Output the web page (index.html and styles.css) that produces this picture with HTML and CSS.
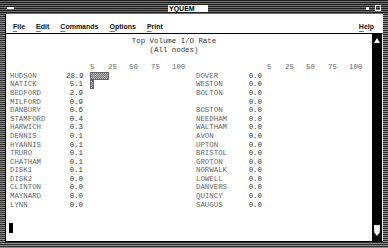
FILE: index.html
```html
<!DOCTYPE html>
<html lang="en">
<head>
    <meta charset="UTF-8">
    <title>YQUEM</title>
    <link rel="stylesheet" href="styles.css">
</head>
<body>

    <div class="window">
        <div class="titlebar">
            <span class="win-menu"></span>
            <span class="title">YQUEM</span>
            <span class="win-min"></span>
            <span class="win-max"></span>
        </div>

        <div class="menubar">
            <span class="menu"><u>F</u>ile</span>
            <span class="menu"><u>E</u>dit</span>
            <span class="menu"><u>C</u>ommands</span>
            <span class="menu"><u>O</u>ptions</span>
            <span class="menu"><u>P</u>rint</span>
            <span class="menu help"><u>H</u>elp</span>
        </div>

        <div class="main">
            <div class="report">
                <div class="heading">Top Volume I/O Rate</div>
                <div class="heading">(All nodes)</div>
                <div class="line"></div>

                <div class="row">
                    <span></span><span></span>
                    <span class="scale"><span>5</span><span>25</span><span>50</span><span>75</span><span>100</span></span>
                    <span></span><span></span>
                    <span class="scale right"><span>5</span><span>25</span><span>50</span><span>75</span><span>100</span></span>
                </div>

                <div class="row">
                    <span class="name">HUDSON</span><span class="val">28.9</span>
                    <span class="cell"><span class="bar" style="width:19px"></span></span>
                    <span class="name">DOVER</span><span class="val">0.0</span><span class="cell"></span>
                </div>
                <div class="row">
                    <span class="name">NATICK</span><span class="val">5.1</span>
                    <span class="cell"><span class="bar" style="width:4px"></span></span>
                    <span class="name">WESTON</span><span class="val">0.0</span><span class="cell"></span>
                </div>
                <div class="row">
                    <span class="name">BEDFORD</span><span class="val">2.9</span><span class="cell"></span>
                    <span class="name">BOLTON</span><span class="val">0.0</span><span class="cell"></span>
                </div>
                <div class="row">
                    <span class="name">MILFORD</span><span class="val">0.9</span><span class="cell"></span>
                    <span class="name"></span><span class="val">0.0</span><span class="cell"></span>
                </div>
                <div class="row">
                    <span class="name">DANBURY</span><span class="val">0.6</span><span class="cell"></span>
                    <span class="name">BOSTON</span><span class="val">0.0</span><span class="cell"></span>
                </div>
                <div class="row">
                    <span class="name">STAMFORD</span><span class="val">0.4</span><span class="cell"></span>
                    <span class="name">NEEDHAM</span><span class="val">0.0</span><span class="cell"></span>
                </div>
                <div class="row">
                    <span class="name">HARWICH</span><span class="val">0.3</span><span class="cell"></span>
                    <span class="name">WALTHAM</span><span class="val">0.0</span><span class="cell"></span>
                </div>
                <div class="row">
                    <span class="name">DENNIS</span><span class="val">0.1</span><span class="cell"></span>
                    <span class="name">AVON</span><span class="val">0.0</span><span class="cell"></span>
                </div>
                <div class="row">
                    <span class="name">HYANNIS</span><span class="val">0.1</span><span class="cell"></span>
                    <span class="name">UPTON</span><span class="val">0.0</span><span class="cell"></span>
                </div>
                <div class="row">
                    <span class="name">TRURO</span><span class="val">0.1</span><span class="cell"></span>
                    <span class="name">BRISTOL</span><span class="val">0.0</span><span class="cell"></span>
                </div>
                <div class="row">
                    <span class="name">CHATHAM</span><span class="val">0.1</span><span class="cell"></span>
                    <span class="name">GROTON</span><span class="val">0.0</span><span class="cell"></span>
                </div>
                <div class="row">
                    <span class="name">DISK1</span><span class="val">0.1</span><span class="cell"></span>
                    <span class="name">NORWALK</span><span class="val">0.0</span><span class="cell"></span>
                </div>
                <div class="row">
                    <span class="name">DISK2</span><span class="val">0.0</span><span class="cell"></span>
                    <span class="name">LOWELL</span><span class="val">0.0</span><span class="cell"></span>
                </div>
                <div class="row">
                    <span class="name">CLINTON</span><span class="val">0.0</span><span class="cell"></span>
                    <span class="name">DANVERS</span><span class="val">0.0</span><span class="cell"></span>
                </div>
                <div class="row">
                    <span class="name">MAYNARD</span><span class="val">0.0</span><span class="cell"></span>
                    <span class="name">QUINCY</span><span class="val">0.0</span><span class="cell"></span>
                </div>
                <div class="row">
                    <span class="name">LYNN</span><span class="val">0.0</span><span class="cell"></span>
                    <span class="name">SAUGUS</span><span class="val">0.0</span><span class="cell"></span>
                </div>

                <div class="cursor"></div>
            </div>

            <div class="scrollbar">
                <svg class="arrow-up" width="6" height="5" viewBox="0 0 6 5">
                    <polygon points="3,0 6,5 0,5" fill="#fff"/>
                </svg>
                <svg class="arrow-down" width="6" height="11" viewBox="0 0 6 11">
                    <rect x="0.5" y="0.5" width="5" height="6" fill="#fff" stroke="#ddd"/>
                    <polygon points="0,7 6,7 3,11" fill="#fff"/>
                </svg>
            </div>
        </div>
    </div>

</body>
</html>
```

FILE: styles.css
```css
/* Okno w stylu Motif */
body {
    margin: 0;
    background-color: #fff;
}

.window {
    width: 388px;
    height: 248px;
    box-sizing: border-box;
    padding: 0 5px 6px 5px;
    display: flex;
    flex-direction: column;
    background: repeating-linear-gradient(to bottom, #2c2c2c 0 1px, #8e8e8e 1px 2px);
    font-family: "Liberation Sans", Arial, sans-serif;
}

.titlebar {
    height: 14px;
    box-sizing: border-box;
    margin: 0 -5px;
    padding: 2px 7px 0 7px;
    display: flex;
    align-items: center;
    background: repeating-linear-gradient(to bottom, #1e1e1e 0 1px, #707070 1px 2px);
}

.win-menu {
    width: 7px;
    height: 2px;
    background-color: #fff;
}

.title {
    margin-left: 154px;
    width: 40px;
    height: 7px;
    box-sizing: border-box;
    padding-left: 1px;
    background-color: #fff;
    color: #000;
    font-size: 7px;
    font-weight: bold;
    line-height: 7px;
}

.win-min {
    margin-left: auto;
    width: 3px;
    height: 3px;
    background-color: #fff;
}

.win-max {
    margin-left: 6px;
    width: 6px;
    height: 6px;
    box-sizing: border-box;
    border: 1px solid #fff;
}

.menubar {
    height: 20px;
    box-sizing: border-box;
    padding: 5px 9px 0 7px;
    display: flex;
    align-items: center;
    gap: 11px;
    background-color: #fff;
    border-left: 1px solid #000;
    border-bottom: 1px solid #000;
    font-size: 7px;
    font-weight: bold;
    color: #111;
}

.menu u {
    text-underline-offset: 2px;
    text-decoration-color: #777;
}

.help {
    margin-left: auto;
}

.main {
    flex: 1;
    display: flex;
    background-color: #fff;
    border-left: 1px solid #000;
    border-bottom: 1px solid #000;
}

.report {
    flex: 1;
    padding-top: 3.4px;
    font-family: "Liberation Mono", "Courier New", monospace;
    font-size: 7.4px;
    line-height: 8.6px;
    color: #333;
}

.heading {
    padding-right: 30px;
    text-align: center;
    height: 8.6px;
}

.line {
    height: 8.6px;
}

.row {
    display: grid;
    grid-template-columns: 56px 17px 113px 49px 17px 1fr;
    height: 8.6px;
    padding-left: 4px;
}

.name {
    color: #666;
}

.val {
    text-align: right;
    color: #333;
}

.cell {
    display: flex;
}

.bar {
    margin-left: 7px;
    height: 8.6px;
    box-sizing: border-box;
    border: 1px solid #666;
    background: repeating-conic-gradient(#666 0 25%, #c8c8c8 0 50%) 0 0 / 2px 2px;
}

.scale {
    display: flex;
    padding-left: 7px;
    color: #666;
}

.scale.right {
    padding-left: 5px;
}

.scale span:nth-child(1) { width: 18px; }
.scale span:nth-child(2) { width: 21px; }
.scale span:nth-child(3) { width: 22px; }
.scale span:nth-child(4) { width: 21px; }

.cursor {
    margin: 13.6px 0 0 3px;
    width: 4px;
    height: 10px;
    background-color: #000;
}

.scrollbar {
    width: 10px;
    display: flex;
    flex-direction: column;
    align-items: center;
    justify-content: space-between;
    padding: 4px 0 5px 0;
    background-color: #000;
    border-right: 1px solid #fff;
}

.arrow-up,
.arrow-down {
    display: block;
}
```
